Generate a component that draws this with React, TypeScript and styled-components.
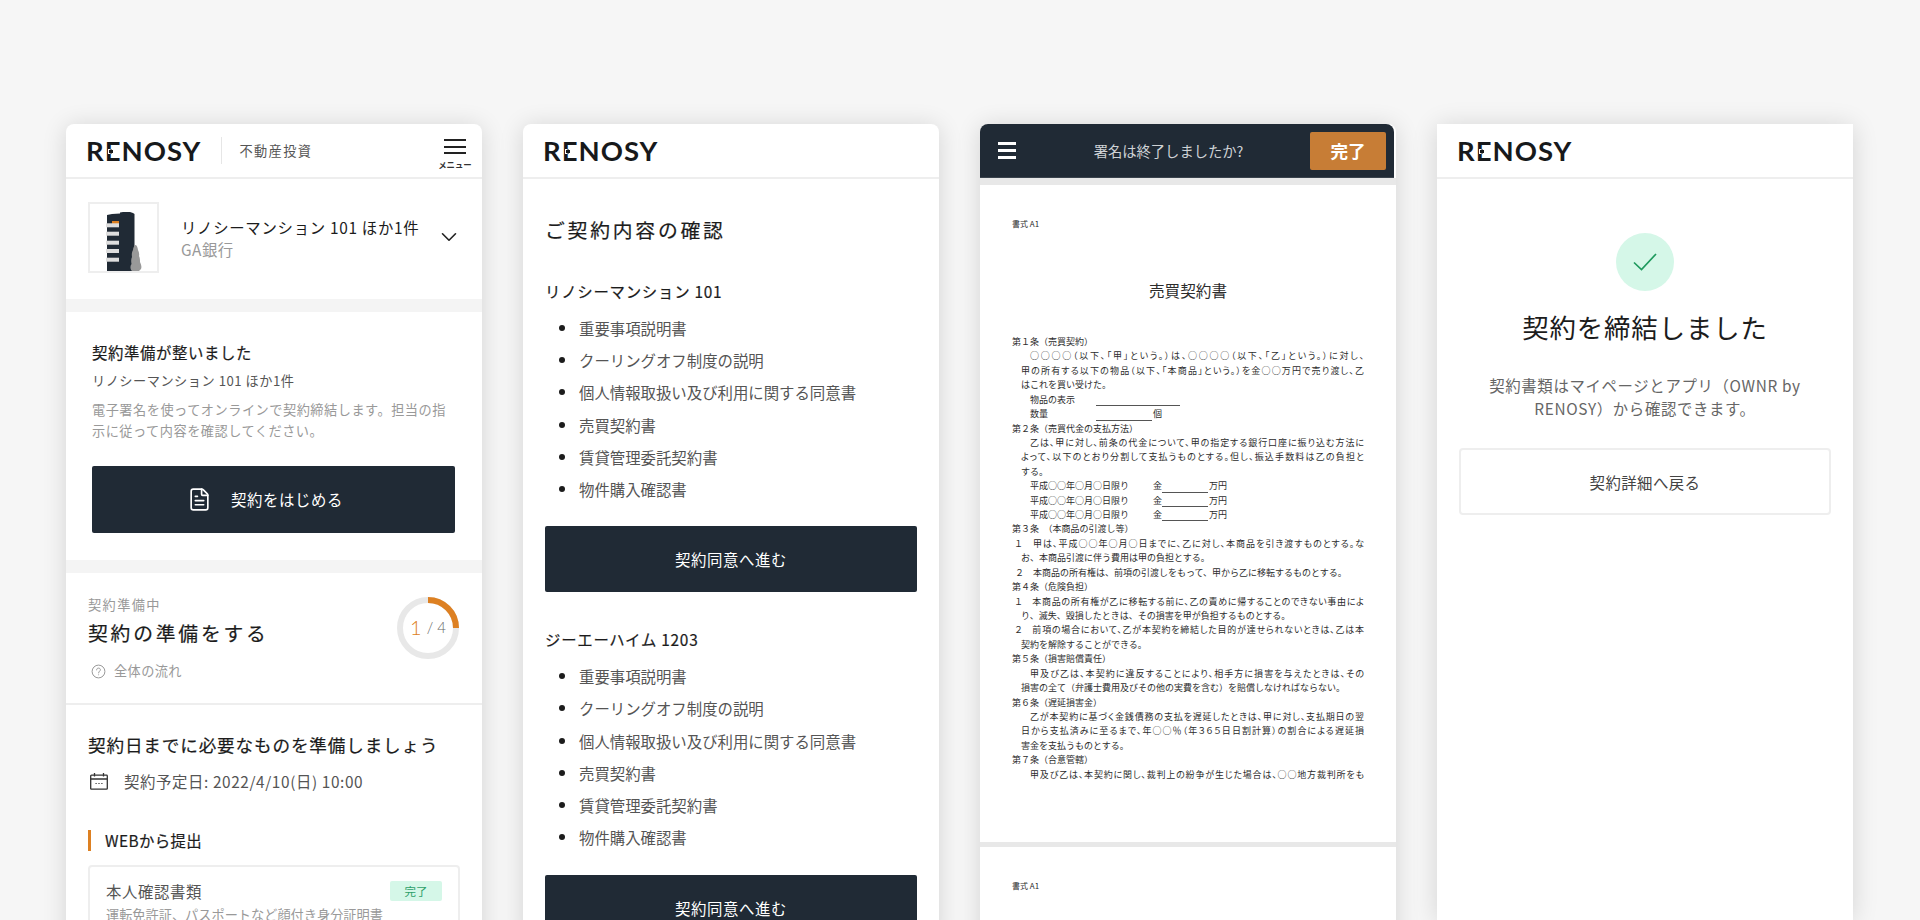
import React from "react";
import styled, { createGlobalStyle, css } from "styled-components";
import { ChevronDown, FileText } from "lucide-react";

const GlobalStyle = createGlobalStyle`
  html, body {
    margin: 0;
    height: 920px;
    overflow: hidden;
    background: #f6f6f6;
  }
  body {
    font-family: "Noto Sans CJK JP", "Noto Sans", sans-serif;
    color: #1c1c1c;
  }
  #root {
    height: 920px;
    overflow: hidden;
  }
`;

const medium = css`
  font-weight: 400;
  -webkit-text-stroke: 0.2px currentColor;
`;

const Page = styled.div`
  display: flex;
  justify-content: center;
  align-items: flex-start;
  gap: 41px;
  padding: 124px 1px 0 0;
  height: 796px;
  overflow: hidden;
`;

const Card = styled.section<{ $square?: boolean }>`
  flex: 0 0 416px;
  width: 416px;
  min-height: 796px;
  background: #fff;
  border-radius: ${(p) => (p.$square ? "0" : "8px 8px 0 0")};
  box-shadow: 0 2px 24px rgba(0, 0, 0, 0.14);
`;

const Header = styled.header`
  display: flex;
  align-items: center;
  height: 53px;
  padding: 0 20px;
  border-bottom: 2px solid #eeeeee;
  position: relative;
`;

const Logo = styled.span`
  font-family: Lato, "Liberation Sans", sans-serif;
  font-weight: 700;
  font-size: 27.5px;
  line-height: 1;
  letter-spacing: 1px;
  color: #17191b;
`;

// the logo's E has a dot in place of its middle bar
const LogoE = styled.span`
  position: relative;
  display: inline-block;
  &::after {
    content: "";
    position: absolute;
    left: 0.13em;
    right: 0.1em;
    top: 0.44em;
    height: 0.17em;
    background: radial-gradient(circle at 0.11em center, #17191b 0.07em, #fff 0.08em);
  }
`;

const HeaderDivider = styled.span`
  width: 1px;
  height: 27px;
  margin: 0 17px 0 20px;
  background: #e6e6e6;
`;

const HeaderTag = styled.span`
  font-size: 13.2px;
  letter-spacing: 1.4px;
  color: #555;
`;

const MenuButton = styled.div`
  position: absolute;
  right: 10px;
  top: 15px;
  width: 34px;
  display: flex;
  flex-direction: column;
  align-items: center;
`;

const MenuBar = styled.span`
  display: block;
  width: 22px;
  height: 2px;
  margin-bottom: 4.7px;
  background: #222;
`;

const MenuLabel = styled.span`
  font-size: 8.4px;
  line-height: 10px;
  font-weight: 700;
  color: #333;
  white-space: nowrap;
`;

const PropertyRow = styled.div`
  display: flex;
  align-items: center;
  height: 120px;
  padding: 0 22px;
`;

const Thumb = styled.div`
  width: 67px;
  height: 67px;
  border: 2px solid #eeeeee;
  flex: none;
  align-self: flex-start;
  margin: 23px 22px 0 0;
  svg {
    display: block;
  }
`;

const PropertyText = styled.div`
  flex: 1;
  margin-top: -2px;
`;

const PropertyName = styled.div`
  font-size: 15.4px;
  line-height: 22.5px;
  letter-spacing: 0.7px;
  white-space: nowrap;
`;

const PropertyBank = styled.div`
  font-size: 15.4px;
  line-height: 22.5px;
  letter-spacing: 0.5px;
  color: #999;
`;

const Chevron = styled(ChevronDown)`
  flex: none;
  margin: -4px -2px 0 0;
  color: #222;
`;

const Band = styled.div`
  height: 13px;
  background: #f4f4f4;
`;

const ReadySection = styled.div`
  padding: 28px 27px 27px 26px;
`;

const ReadyTitle = styled.h3`
  margin: 0 0 6px;
  font-size: 15.4px;
  ${medium}
  line-height: 24px;
  letter-spacing: 0.6px;
`;

const ReadySub = styled.div`
  font-size: 13.2px;
  line-height: 21px;
  color: #555;
  letter-spacing: 0.5px;
  margin-bottom: 8px;
`;

const ReadyDesc = styled.p`
  margin: 0 0 25px;
  font-size: 13.2px;
  line-height: 21px;
  color: #999;
  letter-spacing: 0.5px;
`;

const DarkButton = styled.div<{ $withIcon?: boolean }>`
  display: flex;
  align-items: center;
  justify-content: center;
  height: ${(p) => (p.$withIcon ? 67 : 66)}px;
  padding: 0 ${(p) => (p.$withIcon ? 17 : 0)}px 1px 0;
  box-sizing: border-box;
  background: #202a35;
  border-radius: 2px;
  color: #fff;
  font-size: 15.4px;
  letter-spacing: 0.6px;
  gap: 19px;
`;

const ProgressSection = styled.div`
  position: relative;
  height: 109px;
  padding: 21px 22px 0;
  border-bottom: 2px solid #eeeeee;
`;

const ProgressLabel = styled.div`
  font-size: 13.2px;
  line-height: 22px;
  letter-spacing: 1.4px;
  color: #999;
`;

const ProgressTitle = styled.h2`
  margin: 1px 0 0;
  font-size: 19.8px;
  ${medium}
  line-height: 32px;
  letter-spacing: 2.8px;
`;

const FlowLink = styled.div`
  display: flex;
  align-items: center;
  gap: 8px;
  margin-top: 11px;
  padding-left: 3px;
  font-size: 13.2px;
  line-height: 22px;
  letter-spacing: 0.4px;
  color: #999;
`;

const Ring = styled.div`
  position: absolute;
  top: 24px;
  right: 23px;
  width: 62px;
  height: 62px;
  svg {
    display: block;
  }
`;

const RingText = styled.div`
  position: absolute;
  inset: 0;
  display: flex;
  align-items: center;
  justify-content: center;
  padding-bottom: 3px;
  gap: 5px;
  font-family: Lato, sans-serif;
  font-weight: 300;
  font-size: 15px;
  color: #666;
`;

const RingNow = styled.span`
  font-size: 20px;
  color: #dd8022;
`;

const PrepareSection = styled.div`
  padding: 26px 22px 0;
`;

const PrepareTitle = styled.h3`
  margin: 0;
  font-size: 17.6px;
  ${medium}
  line-height: 28px;
  letter-spacing: 0.85px;
  white-space: nowrap;
`;

const DateRow = styled.div`
  display: flex;
  align-items: center;
  gap: 16px;
  margin-top: 10px;
  padding-left: 2px;
  font-size: 15.4px;
  line-height: 24px;
  letter-spacing: 0.6px;
  color: #555;
`;

const SubmitHead = styled.div`
  margin-top: 37px;
  padding-left: 14px;
  border-left: 3px solid #dd8022;
  font-size: 15.4px;
  ${medium}
  line-height: 21px;
  letter-spacing: 0.4px;
`;

const TaskCard = styled.div`
  margin-top: 14px;
  padding: 12px 16px 30px;
  border: 2px solid #eeeeee;
  border-radius: 4px;
`;

const TaskTop = styled.div`
  display: flex;
  justify-content: space-between;
  align-items: center;
`;

const TaskName = styled.div`
  font-size: 15.4px;
  line-height: 24px;
  color: #555;
  letter-spacing: 0.6px;
`;

const DoneBadge = styled.span`
  display: flex;
  align-items: center;
  justify-content: center;
  width: 52px;
  height: 20px;
  border-radius: 2px;
  background: #d5f7e8;
  color: #2ea06a;
  font-size: 11.5px;
`;

const TaskDesc = styled.div`
  margin-top: 1px;
  font-size: 13.2px;
  line-height: 22px;
  color: #999;
  white-space: nowrap;
`;

const ConfirmBody = styled.div`
  padding: 0 22px;
`;

const ConfirmTitle = styled.h2`
  margin: 0;
  padding-top: 35px;
  font-size: 19.8px;
  ${medium}
  line-height: 32px;
  letter-spacing: 2.8px;
`;

const PropertyHead = styled.h3<{ $gap: number }>`
  margin: ${(p) => p.$gap}px 0 0;
  font-size: 15.4px;
  ${medium}
  line-height: 24px;
  letter-spacing: 0.75px;
`;

const DocList = styled.ul<{ $after: number }>`
  margin: 9px 0 ${(p) => p.$after}px;
  padding: 0;
  list-style: none;
`;

const DocItem = styled.li`
  position: relative;
  padding-left: 34px;
  font-size: 15.4px;
  line-height: 32.2px;
  color: #555;
  &::before {
    content: "";
    position: absolute;
    left: 14px;
    top: 13px;
    width: 6px;
    height: 6px;
    border-radius: 50%;
    background: #1c1c1c;
  }
`;

const SignHeader = styled.header`
  display: flex;
  align-items: center;
  height: 53px;
  margin-right: 2px;
  padding: 0 8px 0 18px;
  background: #202a35;
  border-bottom: 1px solid #3a434d;
  border-radius: 8px 8px 0 0;
`;

const BurgerIcon = styled.div`
  width: 18px;
  flex: none;
  span {
    display: block;
    height: 2.4px;
    margin-bottom: 4.6px;
    background: #fff;
  }
  span:last-child {
    margin-bottom: 0;
  }
`;

const SignTitle = styled.div`
  flex: 1;
  padding-left: 11px;
  text-align: center;
  font-size: 14.3px;
  color: #cfd2d5;
`;

const FinishButton = styled.div`
  display: flex;
  align-items: center;
  justify-content: center;
  width: 76px;
  height: 38px;
  flex: none;
  border-radius: 2px;
  background: #c77d36;
  color: #fff;
  font-size: 17.6px;
  font-weight: 700;
`;

const DocViewer = styled.div`
  background: #e8e8e8;
  padding-top: 7px;
`;

const DocPage = styled.article<{ $height: number }>`
  height: ${(p) => p.$height}px;
  box-sizing: border-box;
  padding: 33px 32px 0;
  margin-bottom: 5px;
  background: #fff;
  overflow: hidden;
  color: #2c2c2c;
`;

const DocForm = styled.div`
  font-size: 8px;
  line-height: 12px;
`;

const DocTitle = styled.h1`
  margin: 48px 0 33px;
  text-align: center;
  font-size: 15.6px;
  font-weight: 400;
  line-height: 24px;
`;

const DocLine = styled.div<{ $indent?: number; $full?: boolean }>`
  height: 14.43px;
  padding-left: ${(p) => p.$indent ?? 0}px;
  font-size: 9px;
  line-height: 14.43px;
  white-space: ${(p) => (p.$full ? "normal" : "nowrap")};
  ${(p) =>
    p.$full &&
    css`
      font-feature-settings: "palt";
      text-align: justify;
      text-align-last: justify;
    `}
`;

const FormRow = styled.div`
  position: relative;
  height: 14.43px;
  padding-left: 18px;
  font-size: 9px;
  line-height: 14.43px;
  white-space: nowrap;
`;

const FieldText = styled.span<{ $at: number }>`
  position: absolute;
  left: ${(p) => p.$at}px;
`;

const Underline = styled.i<{ $at: number; $width: number }>`
  position: absolute;
  left: ${(p) => p.$at}px;
  bottom: 1px;
  width: ${(p) => p.$width}px;
  height: 1px;
  background: #555;
`;

const DoneBody = styled.div`
  padding: 0 22px;
  display: flex;
  flex-direction: column;
  align-items: center;
`;

const CheckCircle = styled.div`
  display: flex;
  align-items: center;
  justify-content: center;
  width: 58px;
  height: 58px;
  margin-top: 54px;
  border-radius: 50%;
  background: #d5f7e8;
`;

const DoneTitle = styled.h2`
  margin: 15px 0 0;
  font-size: 26.4px;
  font-weight: 400;
  line-height: 42px;
  letter-spacing: 0.9px;
`;

const DoneText = styled.p`
  margin: 26px 0 0;
  text-align: center;
  font-size: 15.4px;
  line-height: 23px;
  letter-spacing: 0.65px;
  color: #666;
`;

const OutlineButton = styled.div`
  display: flex;
  align-items: center;
  justify-content: center;
  align-self: stretch;
  height: 63px;
  margin-top: 28px;
  border: 2px solid #eeeeee;
  border-radius: 4px;
  font-size: 15.4px;
  letter-spacing: 0.45px;
  color: #444;
`;

const documents = [
  "重要事項説明書",
  "クーリングオフ制度の説明",
  "個人情報取扱い及び利用に関する同意書",
  "売買契約書",
  "賃貸管理委託契約書",
  "物件購入確認書",
];

const RenosyLogo = () => (
  <Logo>
    R<LogoE>E</LogoE>NOSY
  </Logo>
);

const BuildingThumb = () => (
  <svg width="67" height="67" viewBox="0 0 67 67">
    <path d="M17 11 L22 10 L30 9.5 V8.5 L33 8 L40 8 L43 9 L44.5 10 V67 H17 Z" fill="#202a35" />
    <rect x="22" y="17" width="7" height="3" fill="#dd8022" />
    {[19.3, 27.7, 36.7, 45, 53.7].map((y) => (
      <rect key={y} x="16" y={y} width="13" height="4" fill="#dedede" />
    ))}
    <path d="M45 41 C47 41 47.5 43 48 46 C49 48 49.5 50 49 52 C50 54 50 56 50 58 C51 60 52 63 51 65 L49 67 H42 C40 65 40 62 41.5 60 C41 57 41 55 42 53 C41.5 50 42 48 43 46 C43 44 44 42 45 41 Z" fill="#999" />
  </svg>
);

const HelpIcon = () => (
  <svg width="15" height="15" viewBox="0 0 15 15" fill="none" stroke="#999" strokeWidth="1">
    <circle cx="7.5" cy="7.5" r="6.4" />
    <path d="M5.6 5.9 C5.6 4.7 6.5 4.1 7.5 4.1 C8.6 4.1 9.4 4.8 9.4 5.8 C9.4 7.1 7.6 7.2 7.6 8.9" strokeLinecap="round" />
    <circle cx="7.6" cy="10.8" r="0.5" fill="#999" stroke="none" />
  </svg>
);

const CalendarIcon = () => (
  <svg width="18" height="17" viewBox="0 0 18 17" fill="none" stroke="#333" strokeWidth="1.3">
    <rect x="0.7" y="2.2" width="16.6" height="14" rx="0.8" />
    <path d="M0.7 6 H17.3 M4.5 0 V3.4 M13.5 0 V3.4" />
    <path d="M5.5 10.5 H6.7 M8.4 10.5 H9.6 M11.3 10.5 H12.5" strokeWidth="1" />
  </svg>
);

const MainCard = () => (
  <Card>
    <Header>
      <RenosyLogo />
      <HeaderDivider />
      <HeaderTag>不動産投資</HeaderTag>
      <MenuButton>
        <MenuBar />
        <MenuBar />
        <MenuBar />
        <MenuLabel>メニュー</MenuLabel>
      </MenuButton>
    </Header>
    <PropertyRow>
      <Thumb>
        <BuildingThumb />
      </Thumb>
      <PropertyText>
        <PropertyName>リノシーマンション 101 ほか1件</PropertyName>
        <PropertyBank>GA銀行</PropertyBank>
      </PropertyText>
      <Chevron size={26} strokeWidth={1.5} />
    </PropertyRow>
    <Band />
    <ReadySection>
      <ReadyTitle>契約準備が整いました</ReadyTitle>
      <ReadySub>リノシーマンション 101 ほか1件</ReadySub>
      <ReadyDesc>
        電子署名を使ってオンラインで契約締結します。担当の指示に従って内容を確認してください。
      </ReadyDesc>
      <DarkButton $withIcon>
        <FileText size={25} strokeWidth={1.6} />
        契約をはじめる
      </DarkButton>
    </ReadySection>
    <Band />
    <ProgressSection>
      <ProgressLabel>契約準備中</ProgressLabel>
      <ProgressTitle>契約の準備をする</ProgressTitle>
      <FlowLink>
        <HelpIcon />
        全体の流れ
      </FlowLink>
      <Ring>
        <svg width="62" height="62" viewBox="0 0 62 62" fill="none" strokeWidth="6">
          <circle cx="31" cy="31" r="28" stroke="#e8e8e8" />
          <path d="M31 3 A28 28 0 0 1 59 31" stroke="#dd8022" />
        </svg>
        <RingText>
          <RingNow>1</RingNow>/ 4
        </RingText>
      </Ring>
    </ProgressSection>
    <PrepareSection>
      <PrepareTitle>契約日までに必要なものを準備しましょう</PrepareTitle>
      <DateRow>
        <CalendarIcon />
        契約予定日: 2022/4/10(日) 10:00
      </DateRow>
      <SubmitHead>WEBから提出</SubmitHead>
      <TaskCard>
        <TaskTop>
          <TaskName>本人確認書類</TaskName>
          <DoneBadge>完了</DoneBadge>
        </TaskTop>
        <TaskDesc>運転免許証、パスポートなど顔付き身分証明書</TaskDesc>
      </TaskCard>
    </PrepareSection>
  </Card>
);

const ConfirmCard = () => (
  <Card>
    <Header>
      <RenosyLogo />
    </Header>
    <ConfirmBody>
      <ConfirmTitle>ご契約内容の確認</ConfirmTitle>
      <PropertyHead $gap={33}>リノシーマンション 101</PropertyHead>
      <DocList $after={21}>
        {documents.map((d) => (
          <DocItem key={d}>{d}</DocItem>
        ))}
      </DocList>
      <DarkButton>契約同意へ進む</DarkButton>
      <PropertyHead $gap={35}>ジーエーハイム 1203</PropertyHead>
      <DocList $after={22}>
        {documents.map((d) => (
          <DocItem key={d}>{d}</DocItem>
        ))}
      </DocList>
      <DarkButton>契約同意へ進む</DarkButton>
    </ConfirmBody>
  </Card>
);

const SignCard = () => (
  <Card>
    <SignHeader>
      <BurgerIcon>
        <span />
        <span />
        <span />
      </BurgerIcon>
      <SignTitle>署名は終了しましたか?</SignTitle>
      <FinishButton>完了</FinishButton>
    </SignHeader>
    <DocViewer>
      <DocPage $height={657}>
        <DocForm>書式 A1</DocForm>
        <DocTitle>売買契約書</DocTitle>
        <DocLine>第１条（売買契約）</DocLine>
        <DocLine $indent={18} $full>○○○○（以下、「甲」という。）は、○○○○（以下、「乙」という。）に対し、</DocLine>
        <DocLine $indent={9} $full>甲の所有する以下の物品（以下、「本商品」という。）を金○○万円で売り渡し、乙</DocLine>
        <DocLine $indent={9}>はこれを買い受けた。</DocLine>
        <FormRow>物品の表示<Underline $at={84} $width={84} /></FormRow>
        <FormRow>数量<Underline $at={84} $width={56} /><FieldText $at={141}>個</FieldText></FormRow>
        <DocLine>第２条（売買代金の支払方法）</DocLine>
        <DocLine $indent={18} $full>乙は、甲に対し、前条の代金について、甲の指定する銀行口座に振り込む方法に</DocLine>
        <DocLine $indent={9} $full>よって、以下のとおり分割して支払うものとする。但し、振込手数料は乙の負担と</DocLine>
        <DocLine $indent={9}>する。</DocLine>
        {[0, 1, 2].map((i) => (
          <FormRow key={i}>
            平成○○年○月○日限り
            <FieldText $at={141}>金</FieldText>
            <Underline $at={150} $width={46} />
            <FieldText $at={197}>万円</FieldText>
          </FormRow>
        ))}
        <DocLine>第３条　（本商品の引渡し等）</DocLine>
        <DocLine $indent={3} $full>１　甲は、平成○○年○月○日までに、乙に対し、本商品を引き渡すものとする。な</DocLine>
        <DocLine $indent={9}>お、本商品引渡に伴う費用は甲の負担とする。</DocLine>
        <DocLine $indent={3}>２　本商品の所有権は、前項の引渡しをもって、甲から乙に移転するものとする。</DocLine>
        <DocLine>第４条（危険負担）</DocLine>
        <DocLine $indent={3} $full>１　本商品の所有権が乙に移転する前に、乙の責めに帰することのできない事由によ</DocLine>
        <DocLine $indent={9}>り、滅失、毀損したときは、その損害を甲が負担するものとする。</DocLine>
        <DocLine $indent={3} $full>２　前項の場合において、乙が本契約を締結した目的が達せられないときは、乙は本</DocLine>
        <DocLine $indent={9}>契約を解除することができる。</DocLine>
        <DocLine>第５条（損害賠償責任）</DocLine>
        <DocLine $indent={18} $full>甲及び乙は、本契約に違反することにより、相手方に損害を与えたときは、その</DocLine>
        <DocLine $indent={9}>損害の全て（弁護士費用及びその他の実費を含む）を賠償しなければならない。</DocLine>
        <DocLine>第６条（遅延損害金）</DocLine>
        <DocLine $indent={18} $full>乙が本契約に基づく金銭債務の支払を遅延したときは、甲に対し、支払期日の翌</DocLine>
        <DocLine $indent={9} $full>日から支払済みに至るまで、年○○％（年３６５日日割計算）の割合による遅延損</DocLine>
        <DocLine $indent={9}>害金を支払うものとする。</DocLine>
        <DocLine>第７条（合意管轄）</DocLine>
        <DocLine $indent={18} $full>甲及び乙は、本契約に関し、裁判上の紛争が生じた場合は、○○地方裁判所をも</DocLine>
      </DocPage>
      <DocPage $height={200}>
        <DocForm>書式 A1</DocForm>
      </DocPage>
    </DocViewer>
  </Card>
);

const DoneCard = () => (
  <Card $square>
    <Header>
      <RenosyLogo />
    </Header>
    <DoneBody>
      <CheckCircle>
        <svg width="24" height="18" viewBox="0 0 24 18" fill="none" stroke="#1f9a5e" strokeWidth="1.7">
          <path d="M1 9.5 L8.5 16.5 L23 1" />
        </svg>
      </CheckCircle>
      <DoneTitle>契約を締結しました</DoneTitle>
      <DoneText>
        契約書類はマイページとアプリ（OWNR by
        <br />
        RENOSY）から確認できます。
      </DoneText>
      <OutlineButton>契約詳細へ戻る</OutlineButton>
    </DoneBody>
  </Card>
);

export default function App() {
  return (
    <>
      <GlobalStyle />
      <Page>
        <MainCard />
        <ConfirmCard />
        <SignCard />
        <DoneCard />
      </Page>
    </>
  );
}
